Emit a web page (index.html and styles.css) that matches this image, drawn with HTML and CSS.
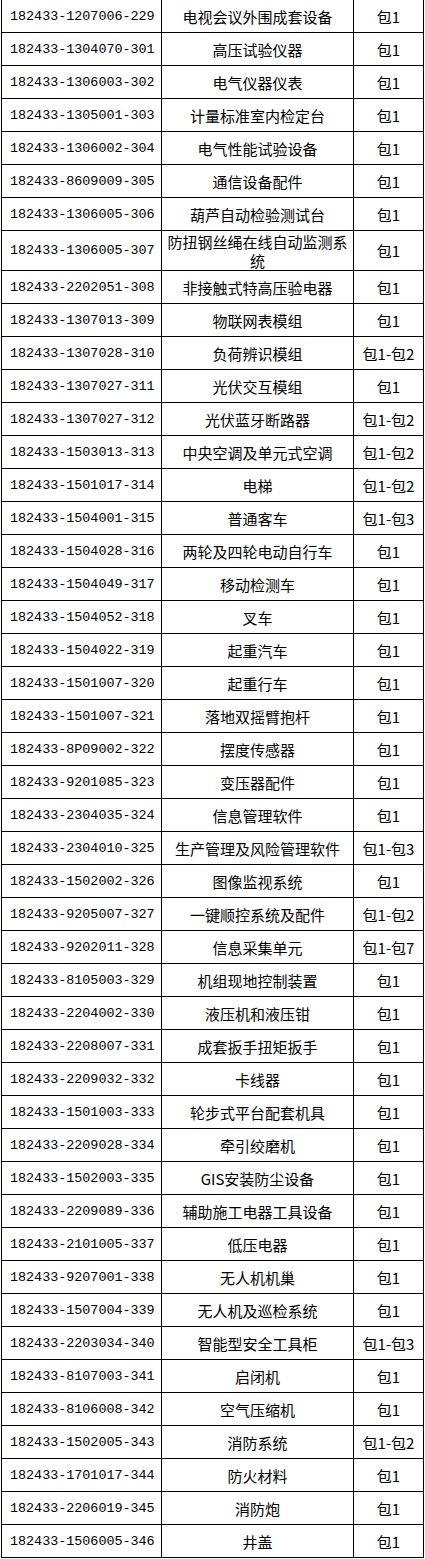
FILE: index.html
```html
<!DOCTYPE html>
<html lang="zh">
<head>
<meta charset="utf-8">
<link rel="stylesheet" href="styles.css">
</head>
<body>
<table class="list">
<colgroup><col class="c-code"><col class="c-name"><col class="c-pkg"></colgroup>
<tbody>
<tr><td class="code">182433-1207006-229</td><td class="name">电视会议外围成套设备</td><td class="pkg">包1</td></tr>
<tr><td class="code">182433-1304070-301</td><td class="name">高压试验仪器</td><td class="pkg">包1</td></tr>
<tr><td class="code">182433-1306003-302</td><td class="name">电气仪器仪表</td><td class="pkg">包1</td></tr>
<tr><td class="code">182433-1305001-303</td><td class="name">计量标准室内检定台</td><td class="pkg">包1</td></tr>
<tr><td class="code">182433-1306002-304</td><td class="name">电气性能试验设备</td><td class="pkg">包1</td></tr>
<tr><td class="code">182433-8609009-305</td><td class="name">通信设备配件</td><td class="pkg">包1</td></tr>
<tr><td class="code">182433-1306005-306</td><td class="name">葫芦自动检验测试台</td><td class="pkg">包1</td></tr>
<tr class="tall"><td class="code">182433-1306005-307</td><td class="name">防扭钢丝绳在线自动监测系统</td><td class="pkg">包1</td></tr>
<tr><td class="code">182433-2202051-308</td><td class="name">非接触式特高压验电器</td><td class="pkg">包1</td></tr>
<tr><td class="code">182433-1307013-309</td><td class="name">物联网表模组</td><td class="pkg">包1</td></tr>
<tr><td class="code">182433-1307028-310</td><td class="name">负荷辨识模组</td><td class="pkg">包1-包2</td></tr>
<tr><td class="code">182433-1307027-311</td><td class="name">光伏交互模组</td><td class="pkg">包1</td></tr>
<tr><td class="code">182433-1307027-312</td><td class="name">光伏蓝牙断路器</td><td class="pkg">包1-包2</td></tr>
<tr><td class="code">182433-1503013-313</td><td class="name">中央空调及单元式空调</td><td class="pkg">包1-包2</td></tr>
<tr><td class="code">182433-1501017-314</td><td class="name">电梯</td><td class="pkg">包1-包2</td></tr>
<tr><td class="code">182433-1504001-315</td><td class="name">普通客车</td><td class="pkg">包1-包3</td></tr>
<tr><td class="code">182433-1504028-316</td><td class="name">两轮及四轮电动自行车</td><td class="pkg">包1</td></tr>
<tr><td class="code">182433-1504049-317</td><td class="name">移动检测车</td><td class="pkg">包1</td></tr>
<tr><td class="code">182433-1504052-318</td><td class="name">叉车</td><td class="pkg">包1</td></tr>
<tr><td class="code">182433-1504022-319</td><td class="name">起重汽车</td><td class="pkg">包1</td></tr>
<tr><td class="code">182433-1501007-320</td><td class="name">起重行车</td><td class="pkg">包1</td></tr>
<tr><td class="code">182433-1501007-321</td><td class="name">落地双摇臂抱杆</td><td class="pkg">包1</td></tr>
<tr><td class="code">182433-8P09002-322</td><td class="name">摆度传感器</td><td class="pkg">包1</td></tr>
<tr><td class="code">182433-9201085-323</td><td class="name">变压器配件</td><td class="pkg">包1</td></tr>
<tr><td class="code">182433-2304035-324</td><td class="name">信息管理软件</td><td class="pkg">包1</td></tr>
<tr><td class="code">182433-2304010-325</td><td class="name">生产管理及风险管理软件</td><td class="pkg">包1-包3</td></tr>
<tr><td class="code">182433-1502002-326</td><td class="name">图像监视系统</td><td class="pkg">包1</td></tr>
<tr><td class="code">182433-9205007-327</td><td class="name">一键顺控系统及配件</td><td class="pkg">包1-包2</td></tr>
<tr><td class="code">182433-9202011-328</td><td class="name">信息采集单元</td><td class="pkg">包1-包7</td></tr>
<tr><td class="code">182433-8105003-329</td><td class="name">机组现地控制装置</td><td class="pkg">包1</td></tr>
<tr><td class="code">182433-2204002-330</td><td class="name">液压机和液压钳</td><td class="pkg">包1</td></tr>
<tr><td class="code">182433-2208007-331</td><td class="name">成套扳手扭矩扳手</td><td class="pkg">包1</td></tr>
<tr><td class="code">182433-2209032-332</td><td class="name">卡线器</td><td class="pkg">包1</td></tr>
<tr><td class="code">182433-1501003-333</td><td class="name">轮步式平台配套机具</td><td class="pkg">包1</td></tr>
<tr><td class="code">182433-2209028-334</td><td class="name">牵引绞磨机</td><td class="pkg">包1</td></tr>
<tr><td class="code">182433-1502003-335</td><td class="name">GIS安装防尘设备</td><td class="pkg">包1</td></tr>
<tr><td class="code">182433-2209089-336</td><td class="name">辅助施工电器工具设备</td><td class="pkg">包1</td></tr>
<tr><td class="code">182433-2101005-337</td><td class="name">低压电器</td><td class="pkg">包1</td></tr>
<tr><td class="code">182433-9207001-338</td><td class="name">无人机机巢</td><td class="pkg">包1</td></tr>
<tr><td class="code">182433-1507004-339</td><td class="name">无人机及巡检系统</td><td class="pkg">包1</td></tr>
<tr><td class="code">182433-2203034-340</td><td class="name">智能型安全工具柜</td><td class="pkg">包1-包3</td></tr>
<tr><td class="code">182433-8107003-341</td><td class="name">启闭机</td><td class="pkg">包1</td></tr>
<tr><td class="code">182433-8106008-342</td><td class="name">空气压缩机</td><td class="pkg">包1</td></tr>
<tr><td class="code">182433-1502005-343</td><td class="name">消防系统</td><td class="pkg">包1-包2</td></tr>
<tr><td class="code">182433-1701017-344</td><td class="name">防火材料</td><td class="pkg">包1</td></tr>
<tr><td class="code">182433-2206019-345</td><td class="name">消防炮</td><td class="pkg">包1</td></tr>
<tr><td class="code">182433-1506005-346</td><td class="name">井盖</td><td class="pkg">包1</td></tr>
</tbody>
</table>
</body>
</html>
```

FILE: styles.css
```css
html, body {
  margin: 0;
  padding: 0;
  background: #ffffff;
}

.list {
  border-collapse: collapse;
  table-layout: fixed;
  width: 423px;
  margin: -1px 0 0 1px;
  color: #000000;
}

.c-code { width: 160px; }
.c-name { width: 192px; }
.c-pkg { width: 70px; }

.list td {
  border: 1px solid #000000;
  height: 33px;
  padding: 0;
  vertical-align: middle;
  box-sizing: border-box;
}

.list tr.tall td {
  height: 40px;
}

.code {
  font-family: "Liberation Mono", "DejaVu Sans Mono", monospace;
  font-size: 13.4px;
  padding-left: 8px !important;
  text-align: left;
  white-space: nowrap;
}

.name {
  font-family: "Noto Sans CJK SC", "DejaVu Sans", sans-serif;
  font-size: 15px;
  line-height: 19px;
  text-align: center;
  padding: 0 5px !important;
}

.pkg {
  font-family: "Noto Sans CJK SC", "DejaVu Sans", sans-serif;
  font-size: 15px;
  text-align: center;
  white-space: nowrap;
}
```
